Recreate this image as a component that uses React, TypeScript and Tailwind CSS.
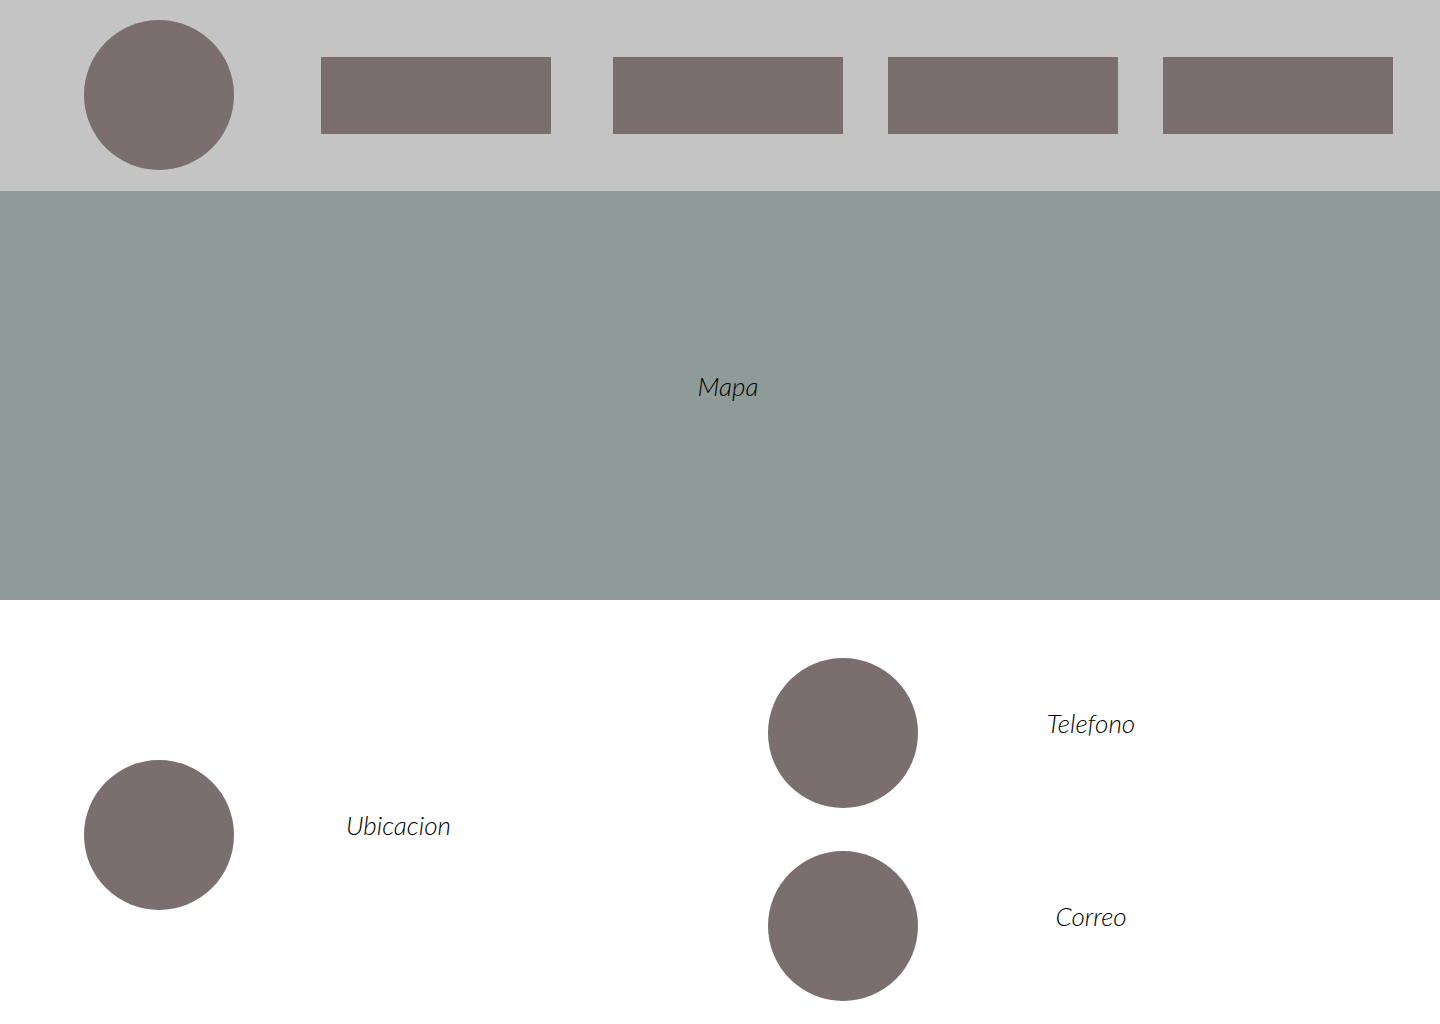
const links = [
  { label: "Inicio", gap: "" },
  { label: "Servicios", gap: "ml-[62px]" },
  { label: "Nosotros", gap: "ml-[45px]" },
  { label: "Contacto", gap: "ml-[45px]" },
];

function Circle() {
  return <div className="size-[150px] shrink-0 rounded-full bg-[#7b6e6e]" />;
}

function Contact({ label }: { label: string }) {
  return (
    <div className="flex items-center gap-[120px]">
      <Circle />
      <p className="w-[106px] pb-5 text-center">{label}</p>
    </div>
  );
}

export default function App() {
  return (
    <div className="min-h-screen bg-white font-['Lato',cursive] text-[26px] leading-8 font-light text-black italic">
      <header className="flex items-center bg-[#c4c4c4] pt-5 pr-[47px] pb-[21px] pl-[84px]">
        <Circle />
        <nav className="ml-[87px] flex flex-1">
          {links.map((link) => (
            <a
              key={link.label}
              href="#"
              aria-label={link.label}
              className={`h-[77px] flex-1 bg-[#7b6e6e] ${link.gap}`}
            />
          ))}
        </nav>
      </header>
      <main>
        <section className="flex h-[409px] items-center justify-center bg-[#8f9b98] pb-5 pl-4">
          <h1>Mapa</h1>
        </section>
        <section className="grid grid-cols-2 pt-[58px] pb-[23px]">
          <div className="flex items-center gap-[112px] pt-[10px] pl-[84px]">
            <Circle />
            <p className="pb-5">Ubicacion</p>
          </div>
          <div className="flex flex-col gap-[43px] pl-12">
            <Contact label="Telefono" />
            <Contact label="Correo" />
          </div>
        </section>
      </main>
    </div>
  );
}
